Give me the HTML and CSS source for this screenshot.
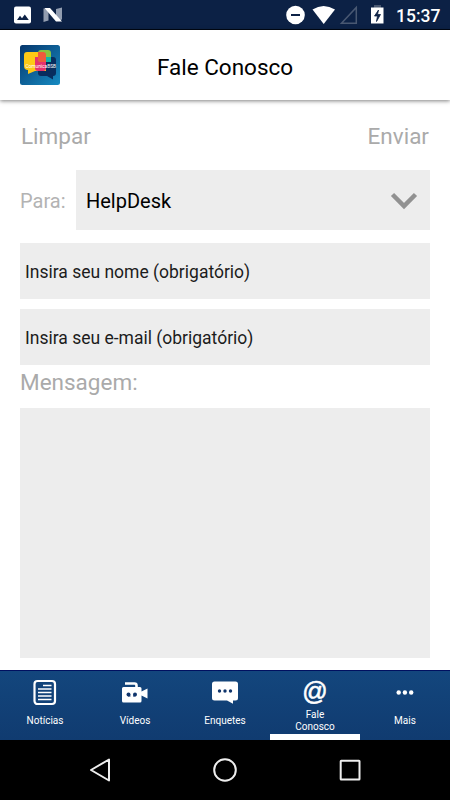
FILE: index.html
```html
<!DOCTYPE html>
<html lang="pt-BR">
<head>
    <meta charset="utf-8">
    <title>Fale Conosco</title>
    <link rel="stylesheet" href="styles.css">
</head>
<body>
    <div class="app">
        <!-- Status bar -->
        <div class="status-bar">
            <svg width="70" height="30" viewBox="0 0 70 30">
                <rect x="14" y="6.5" width="17" height="17" rx="2" fill="#fff"/>
                <path d="M17 20l3-4.2 2 2.5 2.8-3.7 4 5.4z" fill="#0c2145"/>
                <path d="M43.500 8.500h5v12l-5 1.500zM56 9l6-1.500v12l-6 1.500z" fill="#929db0"/>
                <path d="M44.500 8H50l12 13.500h-6z" fill="#fff"/>
            </svg>
            <div class="status-right">
                <svg width="110" height="30" viewBox="280 0 110 30">
                    <circle cx="295.500" cy="15" r="9.300" fill="#fff"/>
                    <path d="M291 15h9" stroke="#0c2145" stroke-width="2"/>
                    <path d="M312.500 9.500Q323.500 2.500 335 9.500L323.700 24z" fill="#fff"/>
                    <path d="M356.300 7.500v15.700H341.500z" fill="none" stroke="#495872" stroke-width="1.500"/>
                    <path d="M374 5h7v3h-7z" fill="#495872"/>
                    <path d="M371 7.500h12.500v16H371z" fill="#fff"/>
                    <path d="M378.500 10l-4 6h3l-1 5.500 4-7h-3z" fill="#0c2145" stroke="#0c2145" stroke-width=".8"/>
                </svg>
                <span class="clock">15:37</span>
            </div>
        </div>

        <!-- Header -->
        <div class="header">
            <svg class="logo" width="40" height="40" viewBox="0 0 40 40">
                <defs>
                    <linearGradient id="logoBg" x1="0" y1="0" x2="1" y2="1">
                        <stop offset="0" stop-color="#06366c"/>
                        <stop offset="1" stop-color="#168bc2"/>
                    </linearGradient>
                </defs>
                <rect width="40" height="40" rx="2.500" fill="url(#logoBg)"/>
                <path d="M18 12h15a3 3 0 0 1 3 3v13a3 3 0 0 1-3 3v3.500L27 31h-6a3 3 0 0 1-3-3z" fill="#082d5e"/>
                <path d="M7 7h16a3 3 0 0 1 3 3v16H15l-7 3v-4a4 4 0 0 1-4-4V10a3 3 0 0 1 3-3z" fill="#fdc916"/>
                <path d="M15 12h11v11a3 3 0 0 1-3 3h-5a3 3 0 0 1-3-3z" fill="#e6326e"/>
                <path d="M18 8a3 3 0 0 1 3-3h7a3 3 0 0 1 3 3v9H21a3 3 0 0 1-3-3z" fill="#89c33f"/>
                <path d="M18 7h5a3 3 0 0 1 3 3v7h-5a3 3 0 0 1-3-3z" fill="#ef5a3c"/>
                <path d="M26 12h5v5h-5z" fill="#10b5ab"/>
                <text x="5.500" y="23" class="logo-text">ComunicaBSB</text>
            </svg>
            <h1>Fale Conosco</h1>
        </div>

        <!-- Contact form -->
        <form class="form">
            <div class="actions">
                <button type="reset">Limpar</button>
                <button type="button">Enviar</button>
            </div>
            <div class="row">
                <label class="to-label">Para:</label>
                <div class="dropdown">
                    <span>HelpDesk</span>
                    <svg width="28" height="20" viewBox="0 0 28 20">
                        <path d="M2.500 3.500L14 15 25.500 3.500" fill="none" stroke="#919191" stroke-width="4.500"/>
                    </svg>
                </div>
            </div>
            <input type="text" placeholder="Insira seu nome (obrigatório)">
            <input type="text" placeholder="Insira seu e-mail (obrigatório)">
            <label class="message-label">Mensagem:</label>
            <textarea></textarea>
        </form>

        <!-- Tabs -->
        <div class="tabs">
            <div class="tab">
                <svg width="30" height="30" viewBox="0 0 30 30">
                    <rect x="4.500" y="3" width="20.500" height="23" rx="3" fill="none" stroke="#fff" stroke-width="2.200"/>
                    <path d="M13 7.500h8.500M8 11h13.500M8 14.500h13.500M8 18h13.500M8 21.500h13.500" stroke="#fff" stroke-width="1.400"/>
                </svg>
                <span>Notícias</span>
            </div>
            <div class="tab">
                <svg width="30" height="30" viewBox="0 0 30 30">
                    <path d="M5 5.500h9.500a2 2 0 0 1 2 2V10" fill="none" stroke="#fff" stroke-width="2.600"/>
                    <path d="M3.500 9H20a1.500 1.500 0 0 1 1.500 1.500v3l6-3v10l-6-3v5.500A1.500 1.500 0 0 1 20 24.500H3.500A1.500 1.500 0 0 1 2 23v-12.500A1.500 1.500 0 0 1 3.500 9z" fill="#fff"/>
                    <circle cx="8.500" cy="16.500" r="2" fill="#10356c"/>
                    <circle cx="15" cy="16.500" r="2" fill="#10356c"/>
                    <path d="M8 18h2.500M13 18h2.500" stroke="#10356c"/>
                </svg>
                <span>Vídeos</span>
            </div>
            <div class="tab">
                <svg width="30" height="30" viewBox="0 0 30 30">
                    <path d="M4.500 3.500h21a2.500 2.500 0 0 1 2.500 2.500v14a2.500 2.500 0 0 1-2.500 2.500H23V25.800L17 22.500H4.500A2.500 2.500 0 0 1 2 20V6a2.500 2.500 0 0 1 2.500-2.500z" fill="#fff"/>
                    <circle cx="9.500" cy="13" r="1.700" fill="#10356c"/>
                    <circle cx="15" cy="13" r="1.700" fill="#10356c"/>
                    <circle cx="20.500" cy="13" r="1.700" fill="#10356c"/>
                </svg>
                <span>Enquetes</span>
            </div>
            <div class="tab active">
                <b class="at">@</b>
                <span>Fale<br>Conosco</span>
            </div>
            <div class="tab">
                <svg width="30" height="30" viewBox="0 0 30 30">
                    <circle cx="8.700" cy="14.500" r="2.200" fill="#fff"/>
                    <circle cx="14.900" cy="14.500" r="2.200" fill="#fff"/>
                    <circle cx="21.200" cy="14.500" r="2.200" fill="#fff"/>
                </svg>
                <span>Mais</span>
            </div>
        </div>

        <!-- System navigation -->
        <div class="nav-bar">
            <svg width="30" height="30" viewBox="0 0 30 30"><path d="M24 4.500v21L6 15z" fill="none" stroke="#eee" stroke-width="2" stroke-linejoin="round"/></svg>
            <svg width="30" height="30" viewBox="0 0 30 30"><circle cx="15" cy="15" r="10.800" fill="none" stroke="#eee" stroke-width="2"/></svg>
            <svg width="30" height="30" viewBox="0 0 30 30"><rect x="5.700" y="5.700" width="18.800" height="18.800" rx=".5" fill="none" stroke="#eee" stroke-width="2"/></svg>
        </div>
    </div>
</body>
</html>
```

FILE: styles.css
```css
* {
    box-sizing: border-box;
}

body {
    margin: 0;
    font-family: Roboto, sans-serif;
    background: #fff;
}

.app {
    display: flex;
    flex-direction: column;
    height: 800px;
    overflow: hidden;
}

svg {
    display: block;
    flex-shrink: 0;
}

.status-bar {
    display: flex;
    justify-content: space-between;
    height: 30px;
    background: #0c2145;
    border-bottom: 1px solid #000714;
}

.status-right {
    display: flex;
    width: 170px;
    gap: 6px;
}

.clock {
    color: #fff;
    font-size: 17.5px;
    font-weight: 500;
    line-height: 32px;
}

.header {
    display: grid;
    grid-template-columns: 40px 1fr 40px;
    align-items: center;
    height: 70px;
    padding: 0 20px;
    box-shadow: 0 1px 4px rgba(0, 0, 0, 0.5);
}

.header h1 {
    margin: 0;
    padding-top: 3px;
    text-align: center;
    font-size: 22.5px;
    font-weight: 400;
}

.logo-text {
    font-size: 4.8px;
    fill: #fff;
}

.form {
    display: flex;
    flex-direction: column;
    height: 570px;
    padding: 20px 20px 12px;
}

.actions {
    display: flex;
    justify-content: space-between;
    height: 50px;
    padding: 0 1px;
}

.actions button {
    height: 32px;
    padding: 0;
    border: none;
    background: none;
    color: #aaa;
    font-family: inherit;
    font-size: 22.5px;
}

.row {
    display: flex;
    height: 60px;
    margin-bottom: 12.5px;
}

.to-label {
    width: 56px;
    color: #b3b3b3;
    font-size: 20px;
    line-height: 62px;
}

.dropdown {
    display: flex;
    flex: 1;
    align-items: center;
    justify-content: space-between;
    padding: 1px 12px 0 10px;
    background: #ededed;
    font-size: 20px;
}

input,
textarea {
    width: 100%;
    border: none;
    border-radius: 0;
    outline: none;
    background: #ededed;
    font-family: inherit;
    font-size: 17.5px;
}

input {
    flex-shrink: 0;
    height: 56px;
    margin-bottom: 10.5px;
    padding: 2px 5px 0;
}

input::placeholder {
    color: #1c1c1c;
}

.message-label {
    height: 43px;
    margin-top: -10.5px;
    color: #aaa;
    font-size: 22.5px;
    line-height: 34px;
}

textarea {
    flex: 1;
    resize: none;
}

.tabs {
    display: flex;
    height: 70px;
    border-top: 1px solid #001060;
    background: linear-gradient(#13467d, #103b70);
}

.tab {
    display: flex;
    flex: 1;
    flex-direction: column;
    align-items: center;
    padding-top: 7px;
    color: #fff;
    font-size: 10px;
    line-height: 12px;
    text-align: center;
}

.tab span {
    margin-top: 7px;
}

.tab.active {
    border-bottom: 6px solid #fff;
}

.tab.active span {
    margin-top: 5px;
}

.at {
    height: 26px;
    font-family: "Liberation Sans", sans-serif;
    font-size: 25px;
    font-weight: 400;
    line-height: 27px;
    -webkit-text-stroke: 0.6px #fff;
}

.nav-bar {
    display: flex;
    align-items: center;
    justify-content: center;
    gap: 95px;
    height: 60px;
    background: #000;
}
```
